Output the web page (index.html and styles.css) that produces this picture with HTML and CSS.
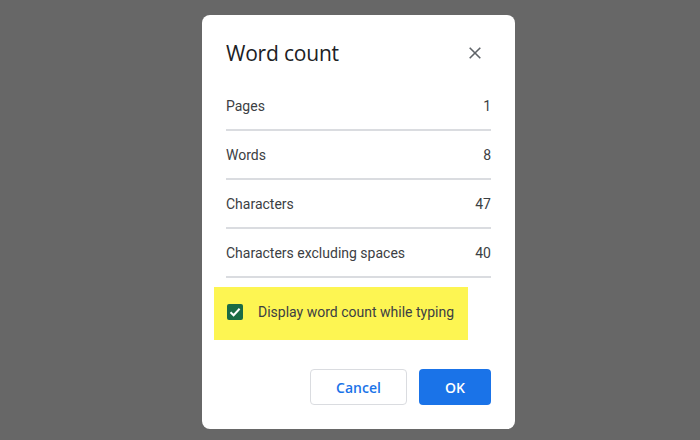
FILE: index.html
```html
<!DOCTYPE html>
<html lang="en">
<head>
    <meta charset="UTF-8">
    <title>Word count</title>
    <link rel="stylesheet" href="styles.css">
</head>
<body>
    <div class="dialog">
        <div class="dialog-header">
            <h1 class="dialog-title">Word count</h1>
            <button class="close-btn" aria-label="Close">
                <svg width="12" height="12" viewBox="0 0 12 12">
                    <path d="M0.7 0.7L11.3 11.3M11.3 0.7L0.7 11.3" stroke="#5f6368" stroke-width="1.6" fill="none"/>
                </svg>
            </button>
        </div>

        <div class="stat-row"><span>Pages</span><span>1</span></div>
        <div class="stat-row"><span>Words</span><span>8</span></div>
        <div class="stat-row"><span>Characters</span><span>47</span></div>
        <div class="stat-row"><span>Characters excluding spaces</span><span>40</span></div>

        <label class="typing-option">
            <span class="checkbox">
                <svg width="16" height="16" viewBox="0 0 16 16">
                    <path d="M3.5 8.2L6.6 11.2L12.6 4.8" stroke="#fff" stroke-width="2" fill="none"/>
                </svg>
            </span>
            Display word count while typing
        </label>

        <div class="dialog-actions">
            <button class="btn btn-cancel">Cancel</button>
            <button class="btn btn-ok">OK</button>
        </div>
    </div>
</body>
</html>
```

FILE: styles.css
```css
body {
    margin: 0;
    background: #676767;
    font-family: Roboto, "Liberation Sans", sans-serif;
    height: 440px;
    overflow: hidden;
}
.dialog {
    width: 265px;
    margin: 15px 0 0 202px;
    padding: 24px 24px 24px 24px;
    background: #fff;
    border-radius: 8px;
}
.dialog-header {
    display: flex;
    justify-content: space-between;
    align-items: center;
    height: 28px;
    margin-bottom: 15px;
}
.dialog-title {
    margin: 0;
    font-family: "Open Sans", Roboto, sans-serif;
    font-weight: 400;
    font-size: 21px;
    color: #202124;
    letter-spacing: -0.2px;
}
.close-btn {
    background: none;
    border: none;
    padding: 0;
    margin-right: 10px;
    width: 12px;
    height: 12px;
    display: flex;
}
.stat-row {
    display: flex;
    justify-content: space-between;
    align-items: center;
    height: 47px;
    border-bottom: 2px solid #dadce0;
    font-size: 14px;
    color: #3c4043;
}
.typing-option {
    display: flex;
    align-items: center;
    gap: 15px;
    width: 241px;
    height: 49px;
    margin: 9px 0 0 -12px;
    padding: 0 0 4px 13px;
    background: #fdf552;
    font-size: 14px;
    color: #3c4043;
}
.checkbox {
    width: 16px;
    height: 16px;
    border-radius: 2px;
    background: #1b6b45;
    display: flex;
}
.dialog-actions {
    display: flex;
    justify-content: flex-end;
    gap: 12px;
    margin-top: 29px;
}
.btn {
    height: 36px;
    border-radius: 4px;
    font-family: "Open Sans", Roboto, sans-serif;
    font-size: 14px;
    font-weight: 600;
    cursor: pointer;
}
.btn-cancel {
    width: 97px;
    background: #fff;
    color: #1a73e8;
    border: 1px solid #dadce0;
}
.btn-ok {
    width: 72px;
    background: #1a73e8;
    color: #fff;
    border: none;
}
```
